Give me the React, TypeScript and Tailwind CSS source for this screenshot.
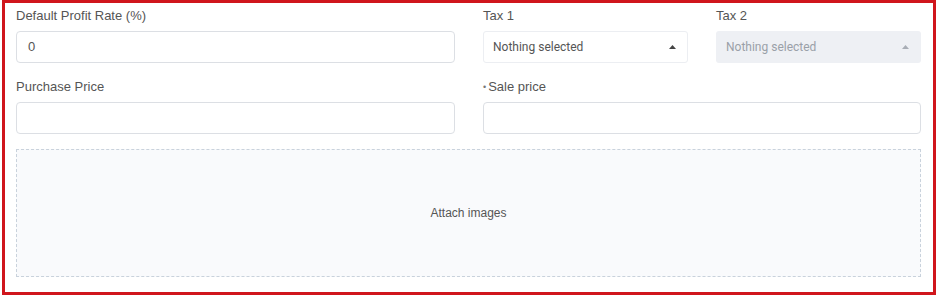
import React from "react";

const Caret = () => (
  <svg width="7" height="4" viewBox="0 0 7 4" className="shrink-0">
    <path d="M0 4 L3.5 0 L7 4 Z" fill="#444" />
  </svg>
);

export default function App() {
  return (
    <div className="w-[937px] h-[296px] bg-white" style={{ fontFamily: '"Liberation Sans", Arial, sans-serif' }}>
      <div className="ml-[2px] w-[934px] h-[295px] border-[3px] border-[#d0161c] bg-white pl-[11px] pr-[12px] pt-[2px]">
        <div className="flex gap-[28px]">
          <div className="w-[439px] flex flex-col">
            <div className="h-[22px] text-[13px] leading-[22px] text-[#555]">Default Profit Rate (%)</div>
            <div className="mt-[4px] h-[32px] rounded-[4px] border border-[#dcdfe4] flex items-center px-[11px] text-[13px] text-[#555]">0</div>
          </div>
          <div className="w-[205px] flex flex-col">
            <div className="h-[22px] text-[13px] leading-[22px] text-[#555]">Tax 1</div>
            <div className="mt-[4px] h-[32px] rounded-[3px] border border-[#eceef2] flex items-center justify-between pl-[9px] pr-[11px] text-[12px] text-[#555]" style={{ fontFamily: 'Roboto, sans-serif' }}>
              <span>Nothing selected</span>
              <Caret />
            </div>
          </div>
          <div className="w-[205px] flex flex-col">
            <div className="h-[22px] text-[13px] leading-[22px] text-[#555]">Tax 2</div>
            <div className="mt-[4px] h-[32px] rounded-[3px] bg-[#eef0f4] flex items-center justify-between pl-[10px] pr-[12px] text-[12px] text-[#9aa0a8]" style={{ fontFamily: 'Roboto, sans-serif' }}>
              <span>Nothing selected</span>
              <svg width="7" height="4" viewBox="0 0 7 4"><path d="M0 4 L3.5 0 L7 4 Z" fill="#a8adb5" /></svg>
            </div>
          </div>
        </div>
        <div className="flex gap-[28px] mt-[13px]">
          <div className="w-[439px] flex flex-col">
            <div className="h-[22px] text-[13px] leading-[22px] text-[#555]">Purchase Price</div>
            <div className="mt-[4px] h-[32px] rounded-[4px] border border-[#dcdfe4]" />
          </div>
          <div className="w-[438px] flex flex-col">
            <div className="h-[22px] text-[13px] leading-[22px] text-[#555] flex items-center">
              <span className="text-[#777] text-[9px] mr-[2px]">•</span>Sale price
            </div>
            <div className="mt-[4px] h-[32px] rounded-[4px] border border-[#dcdfe4]" />
          </div>
        </div>
        <div className="mt-[15px] w-[905px] h-[128px] border border-dashed border-[#c9d2dc] bg-[#f9fafc] flex items-center justify-center text-[12px] text-[#555]">
          Attach images
        </div>
      </div>
    </div>
  );
}
